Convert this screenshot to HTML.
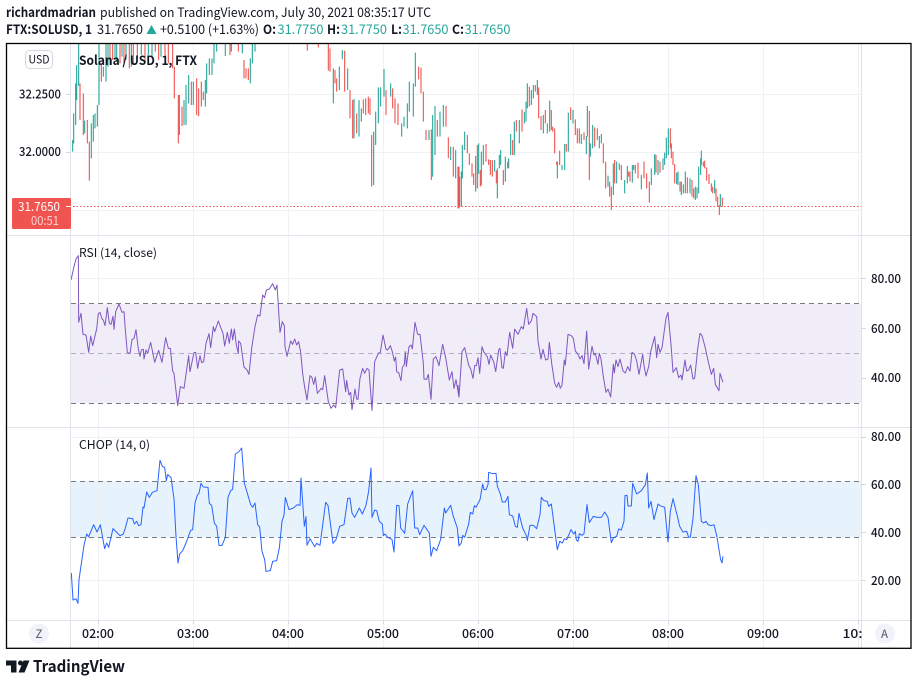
<!DOCTYPE html>
<html><head><meta charset="utf-8"><style>
html,body{margin:0;padding:0;background:#fff;width:918px;height:685px;overflow:hidden}
svg{display:block}
text{font-family:"Noto Sans CJK SC","Liberation Sans",sans-serif;fill:#131722;font-size:12px}
.b{font-weight:700}
.g{fill:#26a69a}
.ax{font-size:12.5px;font-weight:500}
</style></head><body>
<svg width="918" height="685" viewBox="0 0 918 685" xmlns="http://www.w3.org/2000/svg">
<defs><clipPath id="c"><rect x="71" y="44" width="790" height="191"/></clipPath></defs>
<rect x="71" y="304" width="790" height="99" fill="#f0ecf8"/>
<rect x="71" y="481" width="790" height="56" fill="#e6f3fd"/>
<g stroke="#f0f1f4" stroke-width="1" fill="none">
<path d="M98.500 44V648M193.500 44V648M288.500 44V648M383.500 44V648M478.500 44V648M573.500 44V648M668.500 44V648M763.500 44V648M858.500 44V648"/>
<path d="M71 94.500H861M71 152.500H861M71 210.500H861M71 278.500H861M71 328.500H861M71 378.500H861M71 437.500H861M71 484.500H861M71 532.500H861M71 580.500H861"/>
</g>
<path d="M71 303.500H861M71 403.500H861M71 481.500H861M71 537.500H861" stroke="#787b86" stroke-dasharray="5 4" fill="none"/>
<path d="M71 353.500H861" stroke="#b3b0c4" stroke-dasharray="5 4" fill="none"/>
<g clip-path="url(#c)">
<g transform="scale(0.33333)" fill="none" stroke-width="3.300">
<path stroke="#26a69a" d="M218 420V455M221 340V430M227 250V375M230 195V300M236 130V258M254 362V400M274 370V475M280 345V425M285 340V385M292 315V380M297 130V315M310 200V230M318 130V245M324 130V200M345 130V180M350 130V185M366 130V170M378 130V180M394 130V200M424 130V165M445 130V165M456 130V175M483 130V170M538 285V405M552 300V375M558 255V375M566 225V310M580 245V315M616 240V320M620 190V280M628 175V225M636 175V225M642 130V190M650 130V155M676 130V168M694 130V155M727 130V160M751 175V250M757 130V190M765 130V155M1000 205V310M1018 200V270M1027 150V178M1043 205V270M1062 297V415M1077 300V410M1084 325V365M1121 395V555M1127 335V435M1135 262V370M1142 262V320M1152 207V290M1172 250V290M1205 370V410M1212 350V380M1222 310V385M1228 245V335M1240 250V350M1246 158V260M1287 390V420M1298 345V530M1305 318V465M1320 335V410M1330 315V380M1352 440V480M1367 450V535"/>
<path stroke="#ef5350" d="M240 250V360M250 280V405M262 360V430M268 425V542M304 190V245M330 130V195M338 130V180M360 130V190M372 130V195M388 130V205M400 130V190M412 130V175M435 130V185M466 130V155M476 130V180M495 130V165M505 130V190M518 130V205M523 200V295M535 285V430M546 320V378M574 245V315M590 235V345M596 265V348M604 245V320M610 275V300M690 130V165M715 130V155M732 180V235M738 205V235M745 205V240M922 130V152M955 130V142M985 130V212M990 145V215M1005 210V250M1010 235V275M1034 152V275M1050 270V355M1058 300V415M1070 340V400M1090 298V340M1097 295V345M1105 290V340M1110 295V345M1115 405V560M1158 270V345M1178 265V325M1185 295V370M1194 310V375M1256 200V238M1263 203V280M1270 275V365M1278 390V420M1294 388V540M1312 360V410M1338 318V380M1345 412V475M1360 440V530M1377 500V625"/>
</g>
<g transform="translate(458 30) scale(0.33333)" fill="none" stroke-width="3.300">
<path stroke="#26a69a" d="M10 425V530M13 345V445M20 305V360M53 378V485M62 340V432M70 365V465M76 345V405M110 390V425M118 415V505M124 375V415M128 360V405M142 380V455M152 385V415M158 312V375M169 275V375M184 270V340M199 245V280M204 215V275M208 160V235M220 180V225M226 165V205M238 150V195M256 255V310M268 280V310M275 212V305M298 395V445M312 405V420M320 342V420M331 248V365M345 240V280M370 312V342M385 318V372M388 228V320M397 340V380M404 285V355M424 318V355M430 312V340M450 437V470M466 400V495M476 395V460M484 400V420M500 450V490M508 408V460M523 405V458M527 405V420M550 435V478M580 415V465M590 372V435M600 390V435M615 385V420M620 368V405M625 323V385M631 295V375M656 428V462M660 425V465M670 455V495M676 463V490M682 425V490M696 445V490M712 470V510M717 472V505M722 410V490M728 385V435M730 362V405M770 450V490M787 492V530"/>
<path stroke="#ef5350" d="M0 410V535M5 440V530M28 315V370M34 370V405M42 400V440M47 430V465M58 345V475M67 420V470M84 342V395M92 388V405M97 390V435M103 390V440M115 422V460M136 420V465M149 395V415M164 330V375M175 270V305M192 238V305M214 170V230M232 165V185M242 172V265M249 258V300M262 240V280M280 240V300M284 290V305M290 295V370M296 395V405M305 362V405M325 342V365M338 232V270M352 268V315M358 295V340M364 295V340M378 307V330M394 243V450M410 292V350M418 295V330M436 340V400M443 395V475M455 455V500M460 470V540M470 390V460M490 405V450M512 425V440M516 425V455M532 405V430M540 398V445M558 395V445M566 430V475M574 455V518M594 375V428M606 395V428M637 295V355M640 340V385M645 365V405M650 402V460M666 455V485M688 442V490M702 450V500M707 475V505M736 395V410M740 392V415M746 412V452M753 432V462M760 460V485M764 470V490M774 475V515M779 500V530M784 525V555M793 503V530"/>
</g>
</g>
<path d="M66 206.500H861" stroke="#ef5350" stroke-dasharray="1.500 2" fill="none"/>
<g transform="translate(0 235) scale(0.33333)" fill="none" stroke="#7e57c2" stroke-width="3" stroke-linejoin="round">
<polyline points="213,135 222,95 228,72 235,62 236,262 243,235 249,298 258,300 266,352 272,303 278,332 290,282 295,236 300,232 306,252 310,255 315,272 322,218 328,265 333,268 339,244 342,283 347,230 357,207 366,232 372,230 376,285 382,352 390,356 396,314 402,310 408,284 415,342 420,364 424,345 430,343 432,372 438,345 443,355 452,322 464,382 476,346 486,382 497,308 505,340 511,340 518,408 522,415 533,512 541,455 552,460 566,362 570,410 582,353 587,352 593,400 600,362 605,383 611,380 618,325 627,296 632,338 640,275 644,290 655,258 663,280 669,295 674,333 682,292 688,325 694,282 698,315 703,282 709,330 715,355 716,318 722,325 732,396 741,405 747,418 755,340 765,275 773,240 780,243 788,180 794,188 799,165 808,162 818,146 826,165 831,150 840,292 847,260 853,272 855,335 861,364 872,318 878,328 884,312 890,330 896,320 902,352 908,415 913,450 921,495 930,422 936,428 941,448 946,426 952,475 964,460 968,464 974,422 985,500 993,520 1001,510 1007,518 1019,405 1028,402 1037,470 1040,436 1047,480 1052,472 1056,524 1065,462 1070,492 1074,493 1080,430 1088,400 1094,415 1101,400 1107,405 1116,526 1124,380 1135,355 1141,352 1149,300 1158,343 1163,345 1171,332 1177,350 1183,378 1187,366 1190,410 1196,413 1203,437 1207,398 1213,388 1216,350 1219,395 1227,335 1233,330 1237,342 1245,262 1253,298 1260,298 1270,385 1272,432 1280,433 1285,418 1293,493 1300,372 1308,365 1317,392 1328,328 1337,368 1348,435 1356,410 1362,460 1368,434 1377,486"/>
</g>
<g transform="translate(458 235) scale(0.33333)" fill="none" stroke="#7e57c2" stroke-width="3" stroke-linejoin="round">
<polyline points="0,450 3,486 12,350 20,338 32,390 38,402 45,430 50,392 55,392 60,368 65,415 72,335 78,352 88,365 93,388 98,360 107,380 113,410 122,345 126,340 132,398 136,400 142,350 147,362 155,292 164,340 170,282 180,298 190,275 196,282 206,220 212,268 220,258 225,235 236,245 240,318 249,372 255,343 263,375 270,372 274,322 281,385 290,445 296,457 302,442 307,460 312,450 319,375 322,390 330,298 340,302 346,310 352,348 360,358 366,372 372,362 378,386 386,288 392,402 402,334 408,360 412,355 420,388 424,355 429,372 436,425 444,472 450,462 458,486 466,388 469,414 474,375 480,395 486,372 495,408 502,414 509,395 516,408 522,352 530,358 536,378 543,418 554,358 558,392 564,423 572,395 578,350 590,305 596,368 600,328 606,352 612,338 624,250 630,232 640,340 645,412 655,398 662,428 669,420 672,435 681,375 686,408 692,405 698,390 705,432 710,430 719,342 726,295 732,302 741,335 752,385 760,418 767,400 772,448 783,467 786,415 795,442"/>
</g>
<g transform="translate(0 428) scale(0.33333)" fill="none" stroke="#2962ff" stroke-width="3" stroke-linejoin="round">
<polyline points="214,435 219,516 228,512 234,526 237,455 252,352 260,318 266,326 281,290 291,312 301,290 314,362 320,345 326,358 339,302 360,323 370,318 376,300 384,270 398,272 403,288 410,280 416,293 423,290 429,237 432,240 440,192 448,208 457,193 471,188 480,97 487,115 494,118 499,158 503,140 513,148 522,212 528,325 534,405 539,378 548,368 558,345 572,307 578,305 585,225 592,202 597,196 603,166 610,177 624,178 628,226 635,232 643,285 650,295 657,352 666,352 676,328 684,208 692,188 698,184 706,78 716,72 725,60 733,165 752,230 758,238 765,225 773,290 779,297 786,370 794,395 798,430 811,428 818,400 830,398 838,360 846,280 852,262 856,208 867,245 880,240 892,230 900,232 903,150 913,295 918,266 921,352 930,332 944,356 950,346 960,352 977,223 984,232 999,346 1008,335 1019,295 1032,290 1043,212 1050,210 1056,255 1064,268 1078,240 1087,258 1098,232 1106,190 1113,120 1116,268 1124,246 1130,248 1138,280 1147,288 1150,323 1155,318 1163,328 1176,334 1182,372 1190,232 1197,233 1202,300 1214,316 1223,228 1238,188 1244,300 1253,300 1259,320 1272,292 1288,315 1293,385 1300,358 1310,368 1322,334 1333,240 1337,255 1352,232 1360,265 1372,300 1377,354"/>
</g>
<g transform="translate(458 428) scale(0.33333)" fill="none" stroke="#2962ff" stroke-width="3" stroke-linejoin="round">
<polyline points="0,318 3,354 10,345 14,322 20,328 32,288 37,253 44,258 49,233 54,238 66,215 74,168 78,185 84,185 90,170 92,133 104,137 114,136 118,175 126,195 133,222 142,222 150,205 154,260 164,264 172,295 178,298 183,256 194,300 206,325 208,338 216,292 226,292 236,302 246,260 250,208 258,218 268,220 272,235 280,228 298,365 305,340 313,345 319,332 326,335 339,305 347,318 352,310 355,336 360,340 364,317 372,322 378,317 387,230 394,284 406,265 418,268 430,268 440,252 450,268 460,344 466,330 476,325 482,303 490,306 498,280 501,203 507,202 510,234 520,234 524,166 536,198 550,188 562,170 568,135 572,240 579,220 588,275 600,228 606,233 620,238 630,342 637,250 645,212 653,245 657,260 665,295 675,312 686,310 692,328 697,328 705,272 714,143 721,170 730,280 737,285 744,280 750,290 760,293 768,290 776,322 788,395 792,405 795,385"/>
</g>
<g stroke="#e0e3eb" stroke-width="1" fill="none">
<path d="M6 235.500H911M6 427.500H911M6 620.500H911M70.500 44V648M861.500 44V648"/>
<path d="M66 94.500H70M66 152.500H70M861 278.500H866M861 328.500H866M861 378.500H866M861 437.500H866M861 484.500H866M861 532.500H866M861 580.500H866M98.500 620V624M193.500 620V624M288.500 620V624M383.500 620V624M478.500 620V624M573.500 620V624M668.500 620V624M763.500 620V624M858.500 620V624" stroke="#d6d8e0"/>
</g>
<rect x="6.500" y="43.500" width="904.500" height="604.800" fill="none" stroke="#000" stroke-width="1.300"/>
<rect x="25.500" y="50.500" width="27" height="18" rx="4" fill="#fff" stroke="#d6d8e2"/>
<text x="28.500" y="63.500" textLength="21" lengthAdjust="spacingAndGlyphs" style="font-size:11.500px">USD</text>
<text x="79" y="65" class="b" textLength="118" lengthAdjust="spacingAndGlyphs" style="font-size:13px">Solana / USD, 1, FTX</text>
<text x="79" y="257" textLength="78" lengthAdjust="spacingAndGlyphs">RSI (14, close)</text>
<text x="79" y="449" textLength="71" lengthAdjust="spacingAndGlyphs">CHOP (14, 0)</text>
<rect x="12" y="198" width="59" height="31" rx="1.500" fill="#f05451"/>
<text x="18" y="211" textLength="42" lengthAdjust="spacingAndGlyphs" style="fill:#fff;font-size:12.500px">31.7650</text>
<text x="31" y="225" textLength="28" lengthAdjust="spacingAndGlyphs" style="fill:#fbd0cf;font-size:12.500px">00:51</text>
<path d="M66 206.500H71" stroke="#fff"/>
<text x="19" y="98.500" class="ax" textLength="42" lengthAdjust="spacingAndGlyphs">32.2500</text>
<text x="19" y="156" class="ax" textLength="42" lengthAdjust="spacingAndGlyphs">32.0000</text>
<g class="ax">
<text x="871" y="283" class="ax" textLength="30" lengthAdjust="spacingAndGlyphs">80.00</text>
<text x="871" y="333" class="ax" textLength="30" lengthAdjust="spacingAndGlyphs">60.00</text>
<text x="871" y="382" class="ax" textLength="30" lengthAdjust="spacingAndGlyphs">40.00</text>
<text x="871" y="441" class="ax" textLength="30" lengthAdjust="spacingAndGlyphs">80.00</text>
<text x="871" y="489" class="ax" textLength="30" lengthAdjust="spacingAndGlyphs">60.00</text>
<text x="871" y="537" class="ax" textLength="30" lengthAdjust="spacingAndGlyphs">40.00</text>
<text x="871" y="585" class="ax" textLength="30" lengthAdjust="spacingAndGlyphs">20.00</text>
<text x="82" y="638" class="ax" textLength="32" lengthAdjust="spacingAndGlyphs">02:00</text>
<text x="177" y="638" class="ax" textLength="32" lengthAdjust="spacingAndGlyphs">03:00</text>
<text x="272" y="638" class="ax" textLength="32" lengthAdjust="spacingAndGlyphs">04:00</text>
<text x="367" y="638" class="ax" textLength="32" lengthAdjust="spacingAndGlyphs">05:00</text>
<text x="462" y="638" class="ax" textLength="32" lengthAdjust="spacingAndGlyphs">06:00</text>
<text x="557" y="638" class="ax" textLength="32" lengthAdjust="spacingAndGlyphs">07:00</text>
<text x="652" y="638" class="ax" textLength="32" lengthAdjust="spacingAndGlyphs">08:00</text>
<text x="747" y="638" class="ax" textLength="32" lengthAdjust="spacingAndGlyphs">09:00</text>
<text x="842.500" y="638" class="ax" textLength="20" lengthAdjust="spacingAndGlyphs">10:</text>
</g>
<circle cx="39" cy="633.500" r="10" fill="#f0f3fa"/>
<text x="35.500" y="638" style="font-size:11.500px;fill:#50535e">Z</text>
<circle cx="885" cy="633.500" r="10" fill="#f0f3fa"/>
<text x="881" y="638" style="font-size:11.500px;fill:#50535e">A</text>
<text x="6" y="17" class="b" textLength="90" lengthAdjust="spacingAndGlyphs" style="font-size:13px">richardmadrian</text>
<text x="100" y="17" textLength="331" lengthAdjust="spacingAndGlyphs" style="font-size:13px">published on TradingView.com, July 30, 2021 08:35:17 UTC</text>
<text x="6" y="34" class="b" textLength="86" lengthAdjust="spacingAndGlyphs" style="font-size:13px">FTX:SOLUSD, 1</text>
<text x="97" y="34" textLength="46" lengthAdjust="spacingAndGlyphs" style="font-size:13px">31.7650</text>
<path d="M151.500 25L156.500 34H146.500Z" fill="#26a69a"/>
<text x="160" y="34" textLength="99" lengthAdjust="spacingAndGlyphs" style="font-size:13px">+0.5100 (+1.63%)</text>
<text x="263" y="34" class="b" textLength="13" lengthAdjust="spacingAndGlyphs" style="font-size:13px">O:</text>
<text x="277.500" y="34" class="g" textLength="46" lengthAdjust="spacingAndGlyphs" style="font-size:13px">31.7750</text>
<text x="327" y="34" class="b" textLength="13" lengthAdjust="spacingAndGlyphs" style="font-size:13px">H:</text>
<text x="341" y="34" class="g" textLength="46" lengthAdjust="spacingAndGlyphs" style="font-size:13px">31.7750</text>
<text x="391" y="34" class="b" textLength="11" lengthAdjust="spacingAndGlyphs" style="font-size:13px">L:</text>
<text x="402.500" y="34" class="g" textLength="46" lengthAdjust="spacingAndGlyphs" style="font-size:13px">31.7650</text>
<text x="452" y="34" class="b" textLength="12" lengthAdjust="spacingAndGlyphs" style="font-size:13px">C:</text>
<text x="464.500" y="34" class="g" textLength="46" lengthAdjust="spacingAndGlyphs" style="font-size:13px">31.7650</text>
<path d="M6 660.500H16.500V672.500H11V665.500H6Z" fill="#131722"/>
<circle cx="20.500" cy="663" r="2.500" fill="#131722"/>
<path d="M23.500 660.500H29.500L24.500 672.500H18.500Z" fill="#131722"/>
<text x="33" y="672" textLength="92" lengthAdjust="spacingAndGlyphs" style="font-size:16px;font-weight:700">TradingView</text>
</svg>
</body></html>
